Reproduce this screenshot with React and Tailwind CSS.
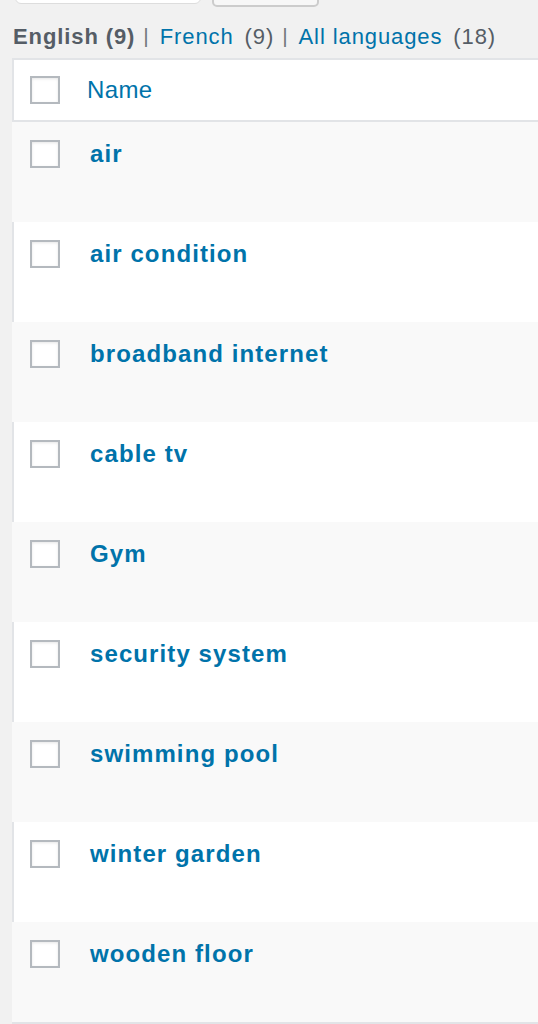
const terms = [
  "air",
  "air condition",
  "broadband internet",
  "cable tv",
  "Gym",
  "security system",
  "swimming pool",
  "winter garden",
  "wooden floor",
]

const Checkbox = () => (
  <span className="block w-[30px] h-[28px] border-2 border-[#b4b9be] bg-white shadow-[inset_0_1px_3px_rgba(0,0,0,0.1)]" />
)

export default function App() {
  return (
    <div className="min-h-[1024px] bg-[#f1f1f1] font-['Liberation_Sans',Arial,sans-serif] overflow-hidden">
      {/* search box + button cut off at the top */}
      <div className="flex items-end h-[8px]">
        <div className="ml-[15px] w-[186px] h-[20px] -mt-[16px] bg-white border border-[#ddd] rounded-b-[6px] self-start" />
        <div className="ml-[11px] w-[107px] h-[24px] -mt-[17px] bg-[#f7f7f7] border-2 border-[#ccc] rounded-b-[5px] self-start" />
      </div>

      <div className="flex items-center h-[50px] pt-[6px] pl-[13px] text-[22px] tracking-[0.9px] text-[#555d66] whitespace-nowrap">
        <span className="font-bold">English (9)</span>
        <span className="ml-[8px] mr-[10px] text-[#72777c] text-[21px]">|</span>
        <span className="text-[#0073aa]">French</span>
        <span className="ml-[11px]">(9)</span>
        <span className="ml-[8px] mr-[10px] text-[#72777c] text-[21px]">|</span>
        <span className="text-[#0073aa]">All languages</span>
        <span className="ml-[11px]">(18)</span>
      </div>

      <div className="ml-[12px] w-[600px] border-t-2 border-b-2 border-[#e2e4e7]">
        <div className="flex items-center h-[62px] bg-white border-l-2 border-b-2 border-[#e2e4e7] pb-[1px]">
          <div className="pl-[16px]">
            <Checkbox />
          </div>
          <span className="ml-[27px] text-[24px] tracking-[0.4px] text-[#0073aa]">Name</span>
        </div>
        {terms.map((t, i) => (
          <div
            key={t}
            className={
              i % 2 === 0
                ? "flex items-start h-[100px] bg-[#f9f9f9] pl-[18px] pt-[18px]"
                : "flex items-start h-[100px] bg-white border-l-2 border-[#e2e4e7] pl-[16px] pt-[18px]"
            }
          >
            <Checkbox />
            <span className="ml-[30px] -mt-[1px] text-[24px] tracking-[1.1px] font-bold text-[#0073aa] leading-[30px]">
              {t}
            </span>
          </div>
        ))}
      </div>
    </div>
  )
}
